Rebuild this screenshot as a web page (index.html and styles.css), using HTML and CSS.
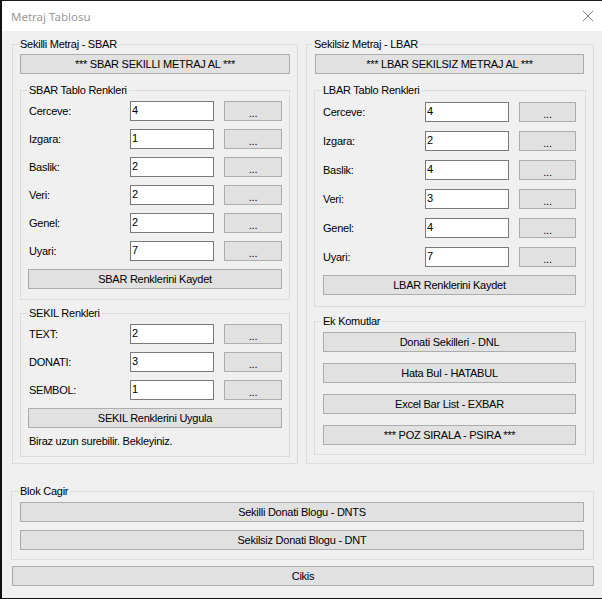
FILE: index.html
```html
<!DOCTYPE html>
<html>
<head>
<meta charset="utf-8">
<link rel="stylesheet" href="styles.css">
</head>
<body>
<div class="window">
  <div class="titlebar">
    <span class="title">Metraj Tablosu</span>
    <svg class="close" width="12" height="12" viewBox="0 0 12 12"><path d="M1 1L11 11M11 1L1 11" stroke="#777" stroke-width="1" fill="none"/></svg>
  </div>
  <div class="client">
    <div class="columns">
      <fieldset class="group outer-left">
        <legend>Sekilli Metraj - SBAR</legend>
        <button class="btn wide">*** SBAR SEKILLI METRAJ AL ***</button>
        <fieldset class="group inner sbar">
          <legend>SBAR Tablo Renkleri</legend>
          <div class="rows">
            <div class="row"><span class="lbl">Cerceve:</span><input class="field" value="4"><button class="btn dots">...</button></div>
            <div class="row"><span class="lbl">Izgara:</span><input class="field" value="1"><button class="btn dots">...</button></div>
            <div class="row"><span class="lbl">Baslik:</span><input class="field" value="2"><button class="btn dots">...</button></div>
            <div class="row"><span class="lbl">Veri:</span><input class="field" value="2"><button class="btn dots">...</button></div>
            <div class="row"><span class="lbl">Genel:</span><input class="field" value="2"><button class="btn dots">...</button></div>
            <div class="row"><span class="lbl">Uyari:</span><input class="field" value="7"><button class="btn dots">...</button></div>
          </div>
          <button class="btn save-left">SBAR Renklerini Kaydet</button>
        </fieldset>
        <fieldset class="group inner sekil">
          <legend>SEKIL Renkleri</legend>
          <div class="rows">
            <div class="row"><span class="lbl">TEXT:</span><input class="field" value="2"><button class="btn dots">...</button></div>
            <div class="row"><span class="lbl">DONATI:</span><input class="field" value="3"><button class="btn dots">...</button></div>
            <div class="row"><span class="lbl">SEMBOL:</span><input class="field" value="1"><button class="btn dots">...</button></div>
          </div>
          <button class="btn save-left">SEKIL Renklerini Uygula</button>
          <p class="note">Biraz uzun surebilir. Bekleyiniz.</p>
        </fieldset>
      </fieldset>
      <fieldset class="group outer-right">
        <legend>Sekilsiz Metraj - LBAR</legend>
        <button class="btn wide-right">*** LBAR SEKILSIZ METRAJ AL ***</button>
        <fieldset class="group inner lbar">
          <legend>LBAR Tablo Renkleri</legend>
          <div class="rows rows-r">
            <div class="row"><span class="lbl">Cerceve:</span><input class="field" value="4"><button class="btn dots">...</button></div>
            <div class="row"><span class="lbl">Izgara:</span><input class="field" value="2"><button class="btn dots">...</button></div>
            <div class="row"><span class="lbl">Baslik:</span><input class="field" value="4"><button class="btn dots">...</button></div>
            <div class="row"><span class="lbl">Veri:</span><input class="field" value="3"><button class="btn dots">...</button></div>
            <div class="row"><span class="lbl">Genel:</span><input class="field" value="4"><button class="btn dots">...</button></div>
            <div class="row"><span class="lbl">Uyari:</span><input class="field" value="7"><button class="btn dots">...</button></div>
          </div>
          <button class="btn save-right">LBAR Renklerini Kaydet</button>
        </fieldset>
        <fieldset class="group inner ek">
          <legend>Ek Komutlar</legend>
          <div class="cmds">
            <button class="btn cmd">Donati Sekilleri - DNL</button>
            <button class="btn cmd">Hata Bul - HATABUL</button>
            <button class="btn cmd">Excel Bar List - EXBAR</button>
            <button class="btn cmd">*** POZ SIRALA - PSIRA ***</button>
          </div>
        </fieldset>
      </fieldset>
    </div>
    <fieldset class="group blok">
      <legend>Blok Cagir</legend>
      <div class="blok-btns">
        <button class="btn cmd">Sekilli Donati Blogu - DNTS</button>
        <button class="btn cmd">Sekilsiz Donati Blogu - DNT</button>
      </div>
    </fieldset>
    <button class="btn exit">Cikis</button>
  </div>
</div>
</body>
</html>
```

FILE: styles.css
```css
* { box-sizing: border-box; }
html, body { margin: 0; padding: 0; background: #f0f0f0; }
body {
  font-family: "Liberation Sans", Arial, sans-serif;
  font-size: 11px;
  letter-spacing: -0.25px;
  color: #000;
}

.window {
  width: 602px;
  height: 599px;
  border-top: 1px solid #1a1a1a;
  border-left: 2px solid #111;
  border-bottom: 1px solid #111;
  background: #f0f0f0;
  display: flex;
  flex-direction: column;
  overflow: hidden;
}

.titlebar {
  height: 30px;
  background: #fff;
  display: flex;
  align-items: center;
  justify-content: space-between;
  padding: 0 8px 0 9px;
  flex: none;
}
.title {
  font-family: "Noto Sans", "Open Sans", sans-serif;
  font-size: 11.5px;
  letter-spacing: 0;
  color: #999;
}
.close { display: block; }

.client {
  padding: 7px 8px 0 10px;
  display: flex;
  flex-direction: column;
}

.columns {
  display: flex;
  gap: 8px;
  align-items: stretch;
}

.group {
  margin: 0;
  border: 1px solid #dcdcdc;
  min-width: 0;
}
.group legend {
  margin-left: -2px;
  padding: 0 2px;
  line-height: 13px;
  height: 13px;
  font-size: 11px;
}

.outer-left {
  width: 286px;
  padding: 3px 7px 6px 7px;
}
.outer-right {
  width: 288px;
  padding: 3px 7px 6px 7px;
}

.btn {
  font-family: "Liberation Sans", Arial, sans-serif;
  font-size: 11px;
  letter-spacing: -0.25px;
  color: #000;
  background: #e1e1e1;
  border: 1px solid #adadad;
  height: 20px;
  padding: 0;
  margin: 0;
  display: block;
  border-radius: 0;
}

.wide { width: 100%; }
.wide-right { width: 269px; margin-left: 1px; }

.inner { margin-top: 10px; }
.sbar { padding: 4px 7px 10px 8px; }
.sekil { margin-top: 7px; padding: 4px 7px 8px 8px; }
.lbar { padding: 5px 9px 11px 8px; }
.ek { margin-top: 8px; padding: 4px 9px 9px 8px; }

.rows {
  display: grid;
  grid-template-columns: 101px 84px 68px;
  row-gap: 8px;
}
.rows-r {
  grid-template-columns: 102px 84px 67px;
  row-gap: 9px;
}
.row { display: contents; }
.lbl { display: flex; align-items: center; height: 20px; }

.field {
  height: 20px;
  width: 84px;
  border: 1px solid #7a7a7a;
  background: #fff;
  font-family: "Liberation Sans", Arial, sans-serif;
  font-size: 11px;
  color: #000;
  padding: 0 1px 3px 1px;
  margin: 0;
  outline: none;
  border-radius: 0;
}
.dots { width: auto; margin-left: 10px; padding-top: 4px; }

.save-left { margin-top: 8px; margin-left: -1px; width: calc(100% + 1px); }
.save-right { margin-top: 8px; width: 100%; }

.note { margin: 7px 0 0 0; line-height: 13px; }

.cmds { display: flex; flex-direction: column; gap: 11px; }
.cmd { width: 100%; }

.blok {
  margin: 21px 0 0 -1px;
  width: 583px;
  padding: 4px 9px 9px 8px;
}
.blok-btns { display: flex; flex-direction: column; gap: 8px; }

.exit { margin-top: 6px; width: 582px; }
```
